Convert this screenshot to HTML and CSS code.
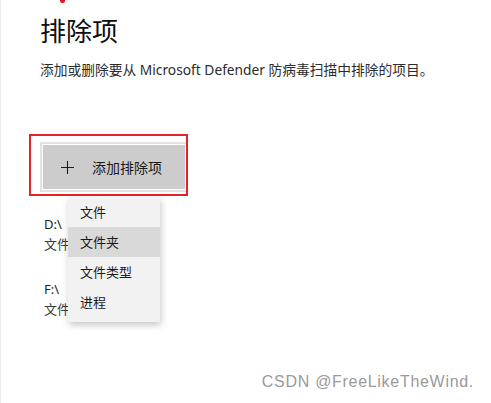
FILE: index.html
```html
<!DOCTYPE html>
<html lang="zh-CN">
<head>
<meta charset="utf-8">
<title>排除项</title>
<link rel="stylesheet" href="styles.css">
</head>
<body>
<div class="page">
  <span class="red-dot"></span>
  <main class="main">
    <h1 class="title">排除项</h1>
    <p class="subtitle">添加或删除要从 Microsoft Defender 防病毒扫描中排除的项目。</p>
    <div class="actions">
      <div class="redbox">
        <div class="btn">
          <div class="btn-inner">
            <svg class="plus" width="13" height="13" viewBox="0 0 13 13"><path d="M6.5 0V13M0 6.5H13" stroke="#1a1a1a" stroke-width="1.1" fill="none"/></svg>
            <span class="btn-label">添加排除项</span>
          </div>
        </div>
      </div>
      <ul class="menu">
        <li class="menu-item">文件</li>
        <li class="menu-item active">文件夹</li>
        <li class="menu-item">文件类型</li>
        <li class="menu-item">进程</li>
      </ul>
    </div>
    <div class="list">
      <div class="entry">
        <div class="entry-path">D:\</div>
        <div class="entry-type">文件</div>
      </div>
      <div class="entry">
        <div class="entry-path">F:\</div>
        <div class="entry-type">文件</div>
      </div>
    </div>
  </main>
  <div class="watermark">CSDN @FreeLikeTheWind.</div>
</div>
</body>
</html>
```

FILE: styles.css
```css
html, body {
  margin: 0;
  padding: 0;
  background: #ffffff;
}
body {
  font-family: "Noto Sans", "Noto Sans CJK SC", sans-serif;
  color: #1b1b1b;
}
.page {
  position: relative;
  width: 491px;
  height: 403px;
  overflow: hidden;
  border-left: 1px solid #ececec;
  box-sizing: border-box;
}
.red-dot {
  position: absolute;
  left: 59px;
  top: -2px;
  width: 5px;
  height: 5px;
  border-radius: 50%;
  background: #e5131b;
}
.main {
  padding: 12px 0 0 39px;
}
.title {
  margin: 0;
  font-family: "Noto Sans CJK SC", sans-serif;
  font-size: 26px;
  line-height: 36px;
  font-weight: 400;
  color: #0d0d0d;
}
.subtitle {
  margin: 12px 0 0;
  font-size: 13.75px;
  line-height: 20px;
  color: #2b2b2b;
}
.actions {
  position: relative;
  margin: 54px 0 0 -11px;
}
.redbox {
  width: 159px;
  height: 62px;
  box-sizing: border-box;
  border: 2px solid #e3232a;
  padding: 6px 0 0 9px;
  overflow: hidden;
}
.btn {
  background: #e2e2e2;
  padding: 2px 0 2px 2px;
  height: 50px;
  box-sizing: border-box;
}
.btn-inner {
  display: flex;
  align-items: center;
  gap: 18px;
  height: 100%;
  box-sizing: border-box;
  border: 1px solid #ffffff;
  background: #cccccc;
  padding-left: 18px;
}
.plus {
  display: block;
}
.btn-label {
  font-family: "Noto Sans CJK SC", sans-serif;
  font-size: 14px;
  color: #1a1a1a;
}
.menu {
  position: absolute;
  left: 39px;
  top: 63px;
  z-index: 2;
  width: 92px;
  margin: 0;
  padding: 0 0 5px;
  list-style: none;
  background: #f2f2f2;
  box-shadow: 1px 3px 7px rgba(0, 0, 0, 0.22);
}
.menu-item {
  height: 30px;
  line-height: 30px;
  padding-left: 12px;
  font-family: "Noto Sans CJK SC", sans-serif;
  font-size: 13px;
  color: #1a1a1a;
}
.menu-item.active {
  background: #d9d9d9;
}
.list {
  display: flex;
  flex-direction: column;
  gap: 27px;
  margin: 19px 0 0 4px;
}
.entry {
  font-size: 13px;
  line-height: 19px;
  color: #1b1b1b;
}
.entry-type {
  font-family: "Noto Sans CJK SC", sans-serif;
  color: #3a3a3a;
}
.watermark {
  position: absolute;
  right: 17px;
  bottom: 12px;
  font-family: "Liberation Sans", Arial, sans-serif;
  font-size: 16px;
  line-height: 18px;
  color: #9a9a9a;
  letter-spacing: 0.7px;
}
```
